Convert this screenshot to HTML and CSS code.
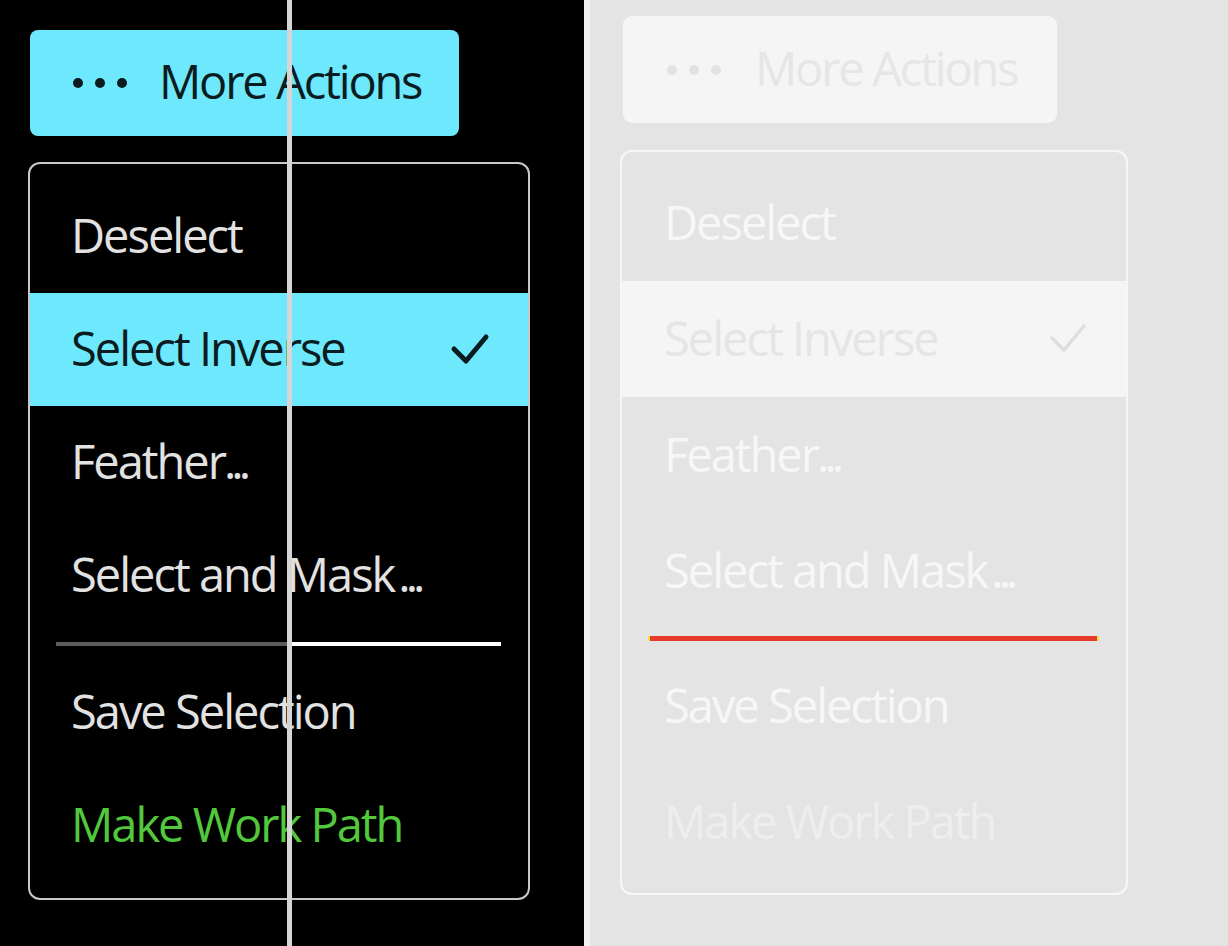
FILE: index.html
```html
<!DOCTYPE html>
<html lang="en">
<head>
<meta charset="utf-8">
<title>More Actions menu</title>
<link rel="stylesheet" href="styles.css">
</head>
<body>
<div class="stage">
  <section class="panel panel-hc">
    <button class="more-btn" type="button">
      <span class="dots"><i></i><i></i><i></i></span>
      <span class="btn-label">More Actions</span>
    </button>
    <ul class="menu">
      <li class="item"><span class="label">Deselect</span></li>
      <li class="item selected"><span class="label">Select Inverse</span><svg class="check" viewBox="0 0 40 36"><path d="M4 18 L16 30 L36 6"/></svg></li>
      <li class="item"><span class="label">Feather<span class="ell">...</span></span></li>
      <li class="item"><span class="label">Select and Mask<span class="ell sp">...</span></span></li>
      <li class="divider"><span class="rule"></span></li>
      <li class="item"><span class="label">Save Selection</span></li>
      <li class="item link"><span class="label">Make Work Path</span></li>
    </ul>
    <div class="split-line"></div>
  </section>
  <section class="panel panel-light">
    <button class="more-btn" type="button">
      <span class="dots"><i></i><i></i><i></i></span>
      <span class="btn-label">More Actions</span>
    </button>
    <ul class="menu">
      <li class="item"><span class="label">Deselect</span></li>
      <li class="item selected"><span class="label">Select Inverse</span><svg class="check" viewBox="0 0 40 36"><path d="M4 18 L16 30 L36 6"/></svg></li>
      <li class="item"><span class="label">Feather<span class="ell">...</span></span></li>
      <li class="item"><span class="label">Select and Mask<span class="ell sp">...</span></span></li>
      <li class="divider"><span class="rule"></span></li>
      <li class="item"><span class="label">Save Selection</span></li>
      <li class="item link"><span class="label">Make Work Path</span></li>
    </ul>
  </section>
</div>
</body>
</html>
```

FILE: styles.css
```css
html, body {
  margin: 0;
  padding: 0;
}

body {
  width: 1228px;
  height: 946px;
  overflow: hidden;
  font-family: "Open Sans", "Noto Sans", sans-serif;
}

.stage {
  display: flex;
  height: 946px;
}

.panel {
  position: relative;
  display: flex;
  flex-direction: column;
  align-items: flex-start;
  box-sizing: border-box;
}

/* ---------- buttons ---------- */
.more-btn {
  display: flex;
  align-items: center;
  border: none;
  margin: 0;
  font-family: inherit;
  font-size: 47px;
  letter-spacing: -2.2px;
  cursor: pointer;
  box-sizing: border-box;
}

.dots {
  display: flex;
  gap: 12px;
}

.dots i {
  display: block;
  width: 10px;
  height: 10px;
  border-radius: 50%;
}

.btn-label {
  line-height: 1;
  padding-bottom: 3px;
}

/* ---------- menus ---------- */
.menu {
  list-style: none;
  margin: 0;
  box-sizing: border-box;
  border-style: solid;
  font-size: 47px;
  letter-spacing: -2px;
}

.item {
  display: flex;
  align-items: center;
  justify-content: space-between;
  white-space: nowrap;
  line-height: 1;
  box-sizing: border-box;
  padding-bottom: 2px;
}

.ell {
  letter-spacing: -5px;
  margin-left: -1px;
}

.ell.sp {
  margin-left: 4px;
}

.divider {
  display: flex;
  align-items: center;
}

.rule {
  display: block;
  flex: 1;
}

.check {
  display: block;
  fill: none;
  stroke-linecap: round;
  stroke-linejoin: round;
}

/* ---------- high contrast (left) ---------- */
.panel-hc {
  width: 584px;
  background: #000;
  padding: 30px 0 0 28px;
}

.panel-hc .more-btn {
  width: 429px;
  height: 106px;
  margin-left: 2px;
  padding-left: 43px;
  background: #6ee8fd;
  border-radius: 8px;
  color: #0b1c20;
}

.panel-hc .dots i {
  background: #0b1c20;
}

.panel-hc .btn-label {
  margin-left: 32px;
}

.panel-hc .menu {
  width: 502px;
  margin-top: 26px;
  padding: 16px 0;
  border-width: 2px;
  border-color: #c8c8c8;
  border-radius: 12px;
}

.panel-hc .item {
  height: 113px;
  padding-left: 41px;
  padding-right: 38px;
  color: #e2e2e2;
}

.panel-hc .item.selected {
  background: #6ee8fd;
  color: #0b1c20;
}

.panel-hc .item.link {
  color: #52c83d;
}

.panel-hc .check {
  width: 40px;
  height: 36px;
  stroke: #0b1c20;
  stroke-width: 5;
}

.panel-hc .divider {
  height: 24px;
  padding: 0 27px 0 26px;
}

.panel-hc .rule {
  height: 4px;
  background: linear-gradient(to right, #5c5c5c 0, #5c5c5c 231px, #ffffff 231px, #ffffff 100%);
}

.split-line {
  position: absolute;
  top: 0;
  bottom: 0;
  left: 287px;
  width: 5px;
  background: #d6d6d6;
}

/* ---------- light (right) ---------- */
.panel-light {
  flex: 1;
  background: #e4e4e4;
  border-left: 6px solid #f2f2f2;
  padding: 16px 0 0 30px;
}

.panel-light .more-btn {
  width: 434px;
  height: 107px;
  margin-left: 3px;
  padding-left: 44px;
  background: #f5f5f5;
  border-radius: 9px;
  color: #e6e6e6;
}

.panel-light .dots i {
  background: #e2e2e2;
}

.panel-light .btn-label {
  margin-left: 34px;
}

.panel-light .menu {
  width: 508px;
  margin-top: 27px;
  padding: 13px 0;
  border-width: 2px;
  border-color: #f7f7f7;
  border-radius: 12px;
}

.panel-light .item {
  height: 116px;
  padding-left: 42px;
  padding-right: 38px;
  color: #f7f7f7;
}

.panel-light .item.selected {
  background: #f5f5f5;
  color: #e5e5e5;
}

.panel-light .item.link {
  color: #eeeeee;
}

.panel-light .check {
  width: 40px;
  height: 36px;
  stroke: #dedede;
  stroke-width: 3.5;
}

.panel-light .divider {
  height: 19px;
  padding: 0 27px 0 26px;
}

.panel-light .rule {
  height: 5px;
  background: #e63a2b;
  border-left: 2px solid #f2e23a;
  border-right: 2px solid #f2e23a;
}
```
